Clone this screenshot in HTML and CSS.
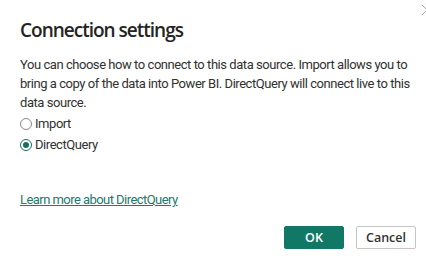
FILE: index.html
```html
<!DOCTYPE html>
<html>
<head lang="en">
    <meta charset="UTF-8">
    <title>Connection settings</title>
    <link rel="stylesheet" href="styles.css">
</head>
<body>
<div class="dialog">
    <svg class="close" width="12" height="12" viewBox="0 0 12 12"><path d="M1 1L11 11M11 1L1 11" stroke="#aaa" stroke-width="1"/></svg>
    <h1 class="title">Connection settings</h1>
    <p class="desc">You can choose how to connect to this data source. Import allows you to bring a copy of the data into Power BI. DirectQuery will connect live to this data source.</p>
    <div class="options">
        <label class="option"><span class="radio"></span>Import</label>
        <label class="option"><span class="radio on"></span>DirectQuery</label>
    </div>
    <a href="javascript:;" class="learn">Learn more about DirectQuery</a>
    <div class="actions">
        <a href="javascript:;" class="btn primary">OK</a>
        <a href="javascript:;" class="btn">Cancel</a>
    </div>
</div>
</body>
</html>
```
FILE: styles.css
```css
* { margin: 0; padding: 0; box-sizing: border-box; text-decoration: none;}
body { background: #fff; font-family: "Open Sans", "Noto Sans", sans-serif; color: #252423;}
.dialog { width: 426px; height: 260px; position: relative; padding: 17px 10px 0 20px;
    display: flex; flex-direction: column;}
.close { position: absolute; right: -7px; top: 4px;}
.title { font-size: 19px; font-weight: 600; line-height: 26px; letter-spacing: -1px;}
.desc, .option, .learn { font-family: Roboto, "Liberation Sans", sans-serif; font-size: 13px;
    letter-spacing: -0.45px; color: #323130;}
.desc { line-height: 19px; margin-top: 12px;}
.options { display: flex; flex-direction: column; gap: 4px; margin-top: 3px;}
.option { display: flex; align-items: center; line-height: 17px;}
.radio { width: 12px; height: 12px; border: 1px solid #8a8886; border-radius: 50%; margin-right: 3px; position: relative;}
.radio.on { border-color: #1b6e5e;}
.radio.on::after { content: ""; position: absolute; left: 2px; top: 2px; width: 6px; height: 6px;
    border-radius: 50%; background: #1b6e5e;}
.learn { margin-top: 39px; color: #217a6b; text-decoration: underline; align-self: flex-start;
    letter-spacing: -0.55px;}
.actions { display: flex; justify-content: flex-end; gap: 12px; margin-top: 19px;}
.btn { width: 60px; height: 23px; border: 1px solid #c8c6c4; border-radius: 2px; font-size: 12.5px;
    font-weight: 600; color: #323130; display: flex; align-items: center; justify-content: center; background: #fff;}
.btn.primary { background: #117865; border-color: #117865; color: #fff;}
```
